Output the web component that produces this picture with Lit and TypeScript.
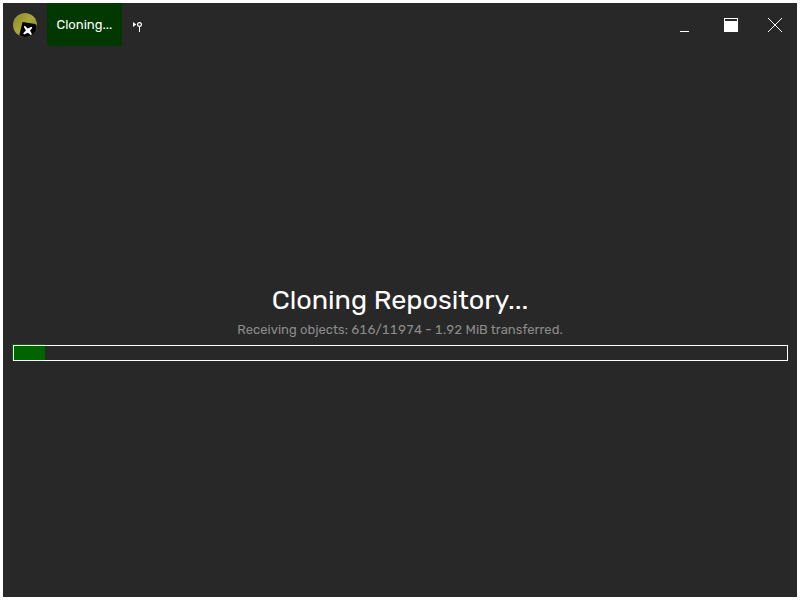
import { LitElement, html, css } from "lit";
import { customElement, property } from "lit/decorators.js";

@customElement("title-bar")
class TitleBar extends LitElement {
  @property() label = "";

  static styles = css`
    :host { display: flex; height: 43px; flex: none; color: #fff; }
    svg { display: block; flex: none; }
    .logo { width: 44px; height: 43px; }
    .tab {
      width: 75px; height: 43px; box-sizing: border-box; padding-left: 9.5px;
      background: #003800; font-size: 13px; line-height: 43px;
      white-space: nowrap;
    }
    .branch { width: 30px; height: 43px; }
    .space { flex: 1; }
    .controls { width: 134px; height: 43px; }
  `;

  render() {
    return html`
      <svg class="logo" viewBox="3 3 44 43">
        <defs>
          <linearGradient id="gold" x1="0" y1="0" x2="1" y2="1">
            <stop offset="0" stop-color="#88862c"></stop>
            <stop offset="0.5" stop-color="#aaa83c"></stop>
            <stop offset="1" stop-color="#76742a"></stop>
          </linearGradient>
        </defs>
        <circle cx="25" cy="25" r="12" fill="url(#gold)"></circle>
        <path d="M22.500 22 L35 24 Q37 24.500 36.600 26.500 L36 30 Q33 37 25 37 Q21.500 36.800 19.300 35.300 Z" fill="#000"></path>
        <path d="M24.800 25.800 L27.700 28.400 L31.700 26.700 L32.300 28 L30 30.500 L32 34.200 L30.800 35 L27.900 32.700 L24 34.600 L23.200 33.300 L25.900 30.600 L23.800 26.700 Z" fill="#fff"></path>
      </svg>
      <div class="tab">${this.label}</div>
      <svg class="branch" viewBox="122 3 30 43">
        <path d="M133 22 L136.300 24.500 L133 27 Z" fill="#fff"></path>
        <circle cx="139.500" cy="24.500" r="1.900" fill="none" stroke="#fff" stroke-width="1.200"></circle>
        <path d="M139.500 26.500 V32" stroke="#fff"></path>
      </svg>
      <div class="space"></div>
      <svg class="controls" viewBox="663 3 134 43" fill="#fff">
        <rect x="680" y="31" width="9" height="1"></rect>
        <path fill-rule="evenodd" d="M724 18 H738 V32 H724 Z M725 19 V21 H737 V19 Z"></path>
        <path d="M768 18 L782 32 M782 18 L768 32" stroke="#fff" fill="none"></path>
      </svg>
    `;
  }
}

@customElement("progress-bar")
class ProgressBar extends LitElement {
  @property({ type: Number }) value = 0;

  static styles = css`
    :host {
      display: block; height: 17px; box-sizing: border-box;
      padding: 1px 0 0 1px;
      background: linear-gradient(#006400, #006400) 0 0 / 33px 16px no-repeat;
    }
    .track {
      display: flex; height: 16px; box-sizing: border-box;
      border: 1px solid #fff;
    }
    .fill { background: #006400; }
  `;

  render() {
    return html`<div class="track">
      <div class="fill" style="width:${this.value}%"></div>
    </div>`;
  }
}

@customElement("app-root")
class AppRoot extends LitElement {
  @property() status = "Receiving objects: 616/11974 - 1.92 MiB transferred.";

  static styles = css`
    :host {
      display: block; width: 800px; height: 600px; box-sizing: border-box;
      padding: 3px; background: #fff; font-family: Rubik, Roboto, sans-serif;
    }
    .window {
      display: flex; flex-direction: column; height: 594px;
      background: #282828;
    }
    .body { padding: 236px 9px 0; text-align: center; }
    h1 {
      margin: 0; height: 36px; line-height: 36px; font-size: 27px;
      font-weight: 400; color: #fff; white-space: nowrap;
    }
    p {
      margin: 3px 0 5px; height: 18px; line-height: 18px; font-size: 13px;
      letter-spacing: 0.02px; font-variant-numeric: tabular-nums;
      color: #8c8c8c; white-space: nowrap;
    }
  `;

  render() {
    return html`<div class="window">
      <title-bar label="Cloning..."></title-bar>
      <div class="body">
        <h1>Cloning Repository...</h1>
        <p>${this.status}</p>
        <progress-bar .value=${4}></progress-bar>
      </div>
    </div>`;
  }
}
